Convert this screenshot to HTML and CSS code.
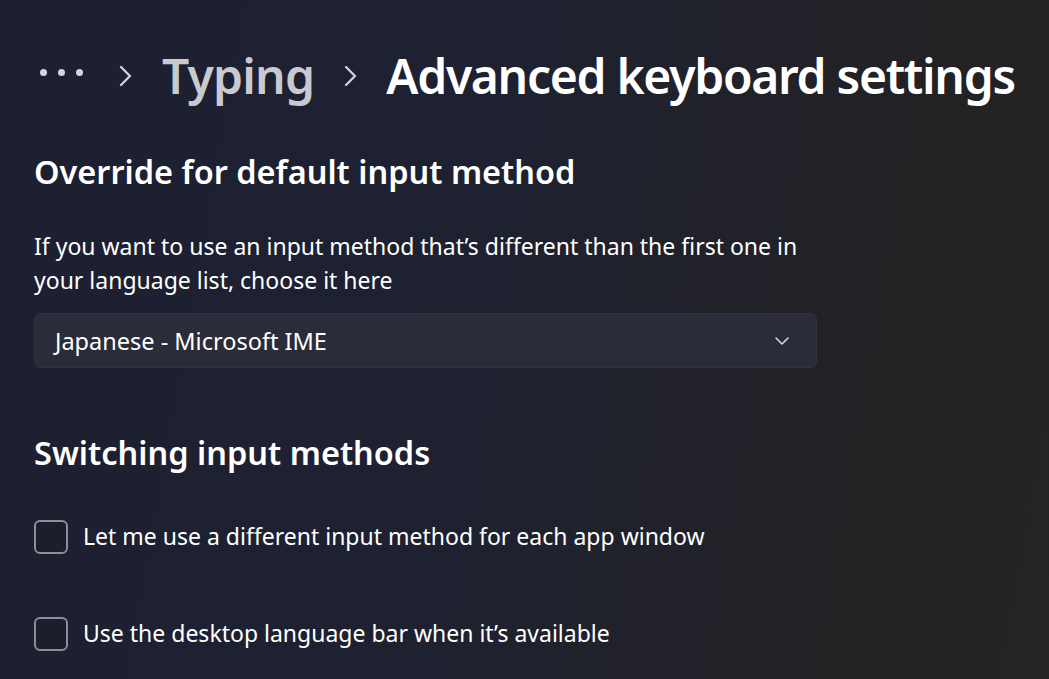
FILE: index.html
```html
<!DOCTYPE html>
<html lang="en">
<head>
<meta charset="utf-8">
<title>Advanced keyboard settings</title>
<link rel="stylesheet" href="styles.css">
</head>
<body>
<div class="page">
  <nav class="breadcrumb">
    <span class="more">
      <span class="dot"></span><span class="dot"></span><span class="dot"></span>
    </span>
    <svg class="chev" width="14" height="22" viewBox="0 0 14 22"><path d="M3 2 L12 11 L3 20" fill="none" stroke="#d0d0d4" stroke-width="2.4" stroke-linecap="round" stroke-linejoin="round"/></svg>
    <span class="crumb">Typing</span>
    <svg class="chev" width="14" height="22" viewBox="0 0 14 22"><path d="M3 2 L12 11 L3 20" fill="none" stroke="#d0d0d4" stroke-width="2.4" stroke-linecap="round" stroke-linejoin="round"/></svg>
    <span class="current">Advanced keyboard settings</span>
  </nav>

  <section class="section first">
    <h2 class="heading">Override for default input method</h2>
    <p class="desc">If you want to use an input method that’s different than the first one in your language list, choose it here</p>
    <div class="select">
      <span>Japanese - Microsoft IME</span>
      <svg width="16" height="10" viewBox="0 0 16 10"><path d="M2 2 L8 8 L14 2" fill="none" stroke="#d8d8d8" stroke-width="1.6" stroke-linecap="round" stroke-linejoin="round"/></svg>
    </div>
  </section>

  <section class="section second">
    <h2 class="heading">Switching input methods</h2>
    <label class="check"><span class="box"></span><span>Let me use a different input method for each app window</span></label>
    <label class="check"><span class="box"></span><span>Use the desktop language bar when it’s available</span></label>
  </section>
</div>
</body>
</html>
```

FILE: styles.css
```css
html, body {
  margin: 0;
  height: 100%;
}
body {
  background: linear-gradient(100deg, #1c2031 0%, #1e2130 45%, #222225 80%, #242424 100%);
  font-family: "Noto Sans", "Open Sans", sans-serif;
  color: #ffffff;
  overflow: hidden;
}
.page {
  padding: 0 0 0 34px;
}
.breadcrumb {
  display: flex;
  align-items: center;
  height: 150px;
}
.more {
  display: flex;
  gap: 11px;
  margin-left: 6px;
  margin-right: 35px;
  margin-bottom: 6px;
}
.dot {
  width: 7px;
  height: 7px;
  border-radius: 50%;
  background: #d6d6da;
}
.chev {
  margin-top: 2px;
}
.crumb {
  font-size: 48px;
  font-weight: 600;
  color: #c9cacf;
  margin: 0 29px 0 30px;
  letter-spacing: -0.8px;
}
.current {
  font-size: 48px;
  font-weight: 600;
  color: #ffffff;
  margin-left: 29px;
  letter-spacing: -1.3px;
}
.heading {
  margin: 0;
  font-size: 32.5px;
  font-weight: 600;
  line-height: 44px;
}
.desc {
  margin: 35px 0 0;
  width: 790px;
  font-size: 23px;
  line-height: 34px;
  color: #ffffff;
}
.select {
  margin-top: 16px;
  width: 783px;
  height: 55px;
  box-sizing: border-box;
  border-radius: 7px;
  background: #2a2d39;
  border: 1px solid #30333e;
  display: flex;
  align-items: center;
  justify-content: space-between;
  padding: 0 26px 0 20px;
  font-size: 23.5px;
}
.section.second {
  margin-top: 63px;
}
.check {
  display: flex;
  align-items: center;
  gap: 15px;
  font-size: 23px;
  height: 34px;
}
.section.second .heading + .check {
  margin-top: 45px;
}
.check + .check {
  margin-top: 63px;
}
.check > span:last-child {
  margin-top: -3px;
}
.box {
  width: 34px;
  height: 34px;
  box-sizing: border-box;
  border: 2px solid #8d8f96;
  border-radius: 6px;
  background: #1b1e2b;
}
```
